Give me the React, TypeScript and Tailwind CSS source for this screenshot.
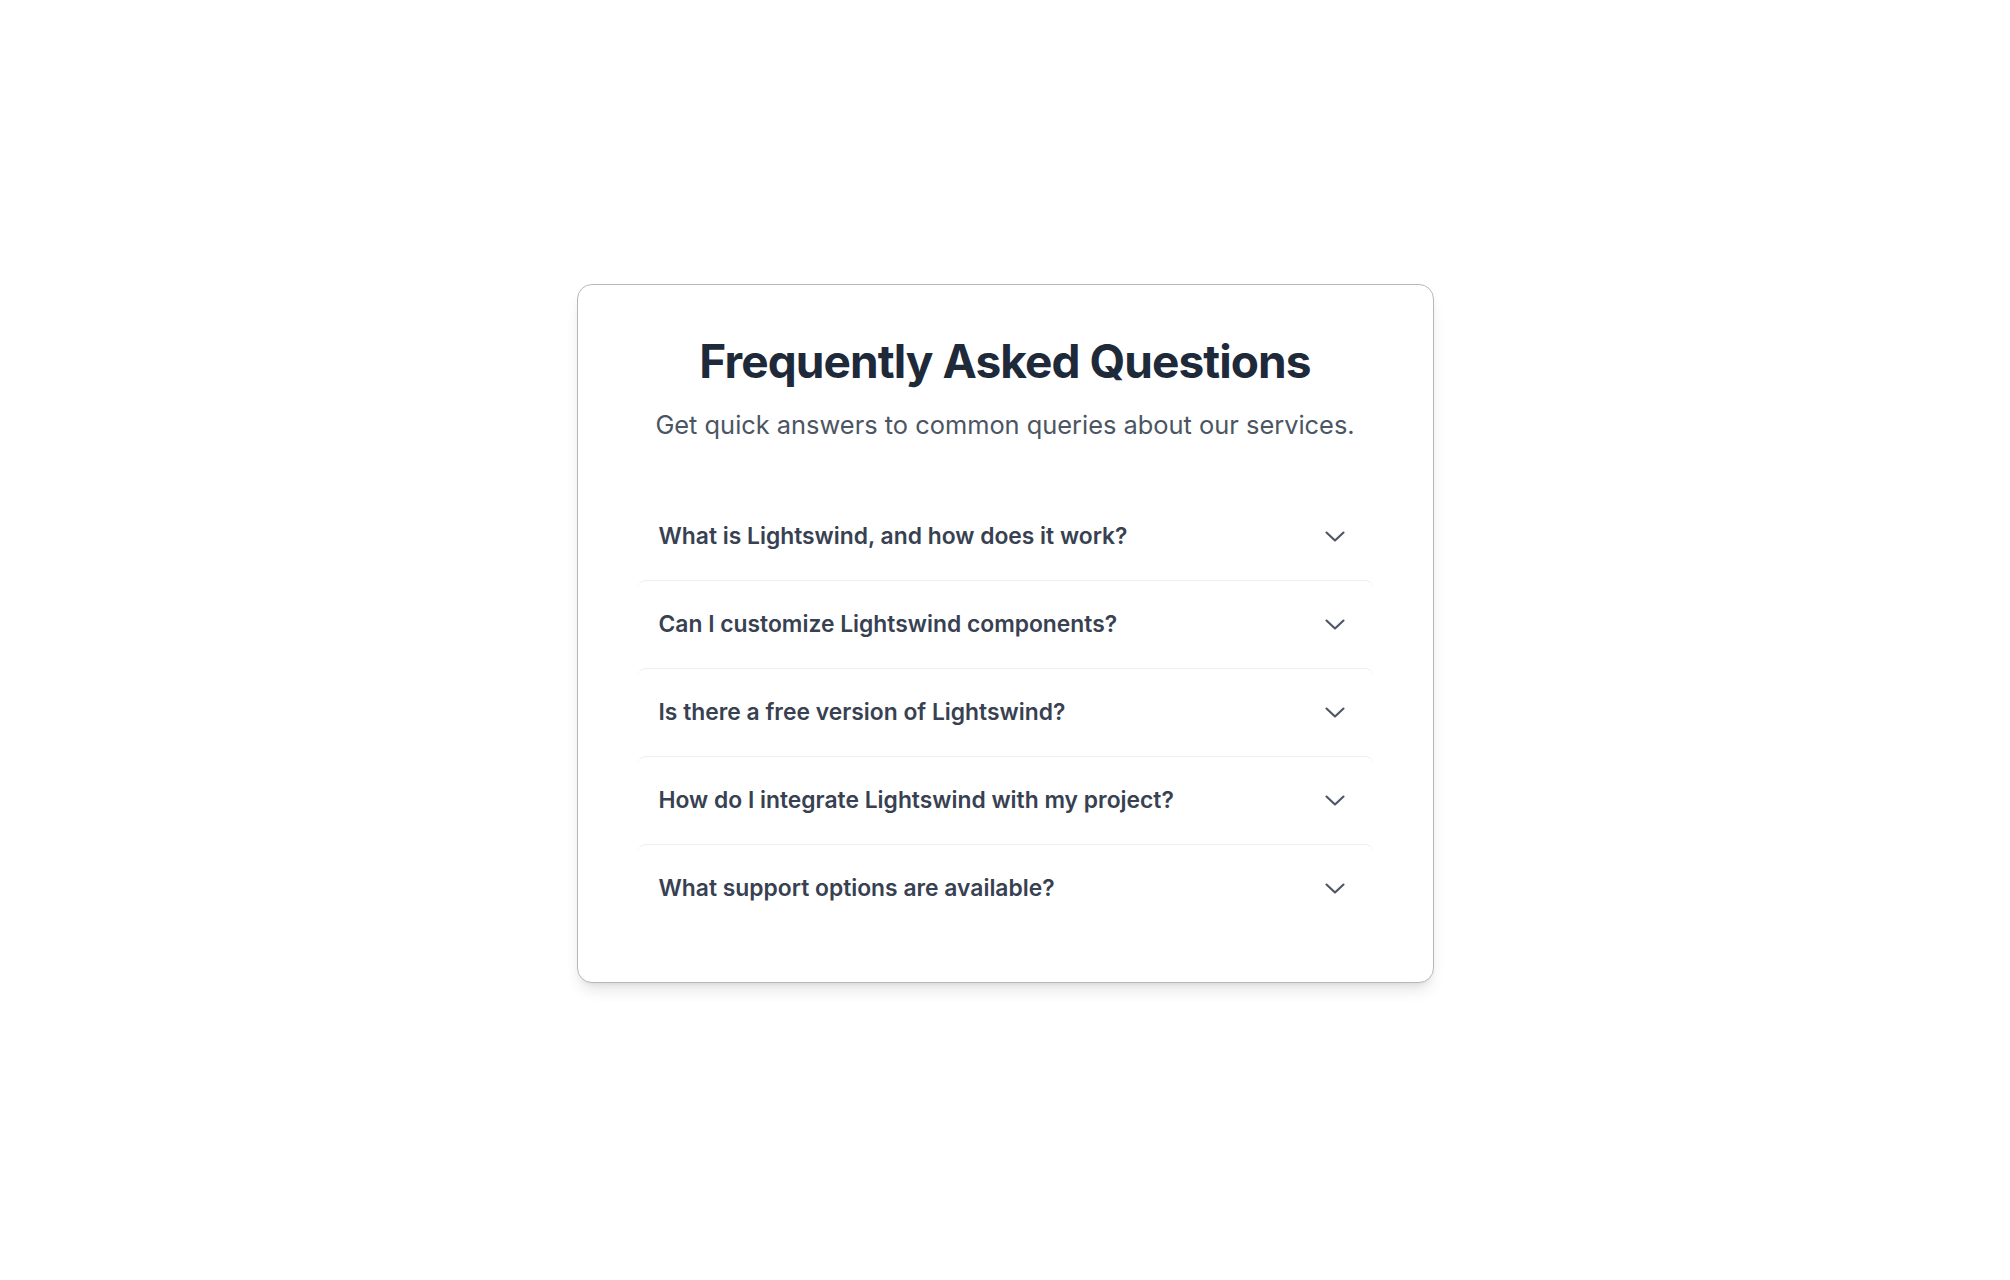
import React from "react";

const questions = [
  "What is Lightswind, and how does it work?",
  "Can I customize Lightswind components?",
  "Is there a free version of Lightswind?",
  "How do I integrate Lightswind with my project?",
  "What support options are available?",
];

function Chevron() {
  return (
    <span className="flex items-center justify-center w-[30px] h-[30px]">
      <svg width="20" height="11" viewBox="0 0 20 11" fill="none">
        <path
          d="M1.5 1.5 L10 9.5 L18.5 1.5"
          stroke="#4b5563"
          strokeWidth="2.1"
          strokeLinecap="round"
          strokeLinejoin="round"
        />
      </svg>
    </span>
  );
}

export default function App() {
  return (
    <div className="min-h-screen bg-white pt-[284px] font-['Inter',sans-serif]">
      <div className="w-[857px] mx-auto bg-white border border-[#b3b8c0] rounded-[15px] shadow-lg px-[60px] pt-[51px] pb-[50px]">
        <h2 className="text-center text-[46px] leading-[50px] font-bold tracking-[-0.02em] text-[#1e2939]">
          Frequently Asked Questions
        </h2>
        <p className="mt-[21px] text-center text-[25.4px] leading-[35px] text-[#4b5563]">
          Get quick answers to common queries about our services.
        </p>
        <div className="mt-[50px]">
          {questions.map((q, i) => (
            <div
              key={q}
              className={
                i === 0
                  ? "flex items-center justify-between border-t border-transparent rounded-lg pl-[21px] pr-[23px] py-[26px]"
                  : "flex items-center justify-between border-t border-[#eceef1] rounded-lg pl-[21px] pr-[23px] py-[26px]"
              }
            >
              <span className="text-[22.85px] leading-[35px] font-semibold text-[#374151]">
                {q}
              </span>
              <Chevron />
            </div>
          ))}
        </div>
      </div>
    </div>
  );
}
